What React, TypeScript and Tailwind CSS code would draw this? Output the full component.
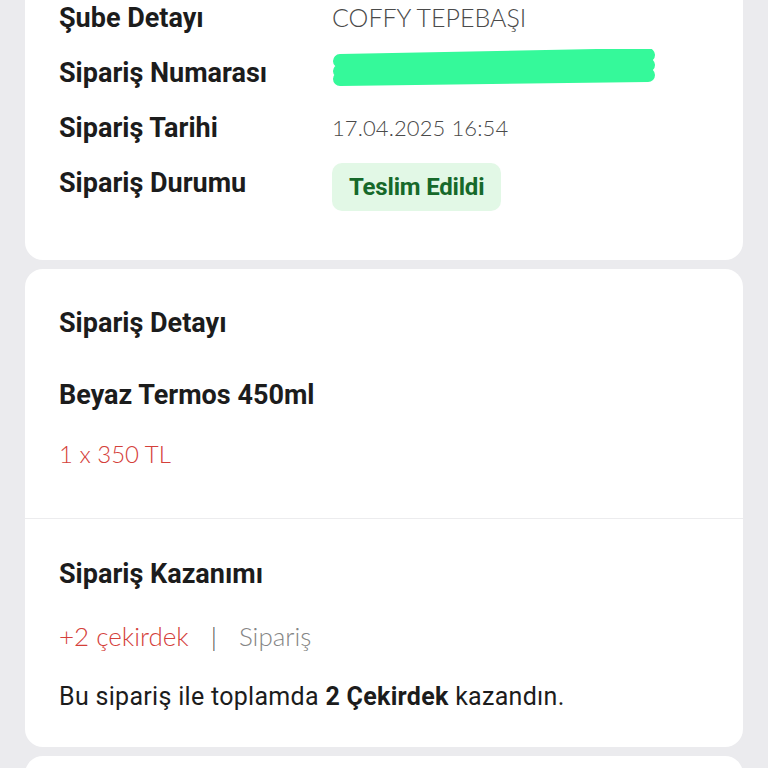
import React from "react";

const label = "text-[27px] leading-[32px] font-bold text-[#1c1c1c] tracking-[0px]";
const light = { fontFamily: "Lato, sans-serif" };

function Row({ title, children }: { title: string; children: React.ReactNode }) {
  return (
    <div className="flex items-center h-[55px]">
      <div className={`${label} w-[273px] shrink-0`}>{title}</div>
      <div className="flex-1">{children}</div>
    </div>
  );
}

function Scribble() {
  return (
    <svg width="330" height="40" viewBox="0 0 330 40" className="block -ml-[2px] -mt-[7px]">
      <path
        d="M10 12 L318 6 M10 22 L318 16 M10 30 L318 26"
        stroke="#35f99a"
        strokeWidth="14"
        strokeLinecap="round"
        fill="none"
      />
    </svg>
  );
}

export default function App() {
  return (
    <div
      className="w-[768px] h-[768px] overflow-hidden bg-[#ebebee] px-[25px]"
      style={{ fontFamily: "Roboto, 'Noto Sans', sans-serif" }}
    >
      {/* Şube / sipariş bilgileri */}
      <div className="bg-white rounded-b-[18px] px-[34px] pb-[50px] -mt-[10px]">
        <Row title="Şube Detayı">
          <span className="text-[25px] font-light text-[#4a4a4a]" style={light}>
            COFFY TEPEBAŞI
          </span>
        </Row>
        <Row title="Sipariş Numarası">
          <Scribble />
        </Row>
        <Row title="Sipariş Tarihi">
          <span className="text-[22px] font-light text-[#4a4a4a] tracking-[0.1px]" style={light}>
            17.04.2025 16:54
          </span>
        </Row>
        <Row title="Sipariş Durumu">
          <span className="inline-flex items-center h-[48px] bg-[#e2f8e6] text-[#16692a] font-bold text-[24px] tracking-[-0.2px] rounded-[10px] px-[17px] mt-[8px]">
            Teslim Edildi
          </span>
        </Row>
      </div>

      {/* Sipariş detayı */}
      <div className="bg-white rounded-[18px] mt-[9px]">
        <div className="px-[34px] pt-[38px] pb-[48px] border-b border-[#ececee]">
          <div className={label}>Sipariş Detayı</div>
          <div className={`${label} mt-[40px]`}>Beyaz Termos 450ml</div>
          <div className="text-[24px] leading-[32px] font-light text-[#d4403a] mt-[27px]" style={light}>
            1 x 350 TL
          </div>
        </div>
        <div className="px-[34px] pt-[39px] pb-[34px]">
          <div className={label}>Sipariş Kazanımı</div>
          <div className="flex items-center text-[26px] leading-[32px] font-light mt-[30px]" style={light}>
            <span className="text-[#d4403a]">+2 çekirdek</span>
            <span className="text-[#555] mx-[22px]">|</span>
            <span className="text-[#858585]">Sipariş</span>
          </div>
          <div className="text-[25px] leading-[32px] text-[#1c1c1c] tracking-[0.3px] mt-[29px]">
            Bu sipariş ile toplamda <span className="font-bold">2 Çekirdek</span> kazandın.
          </div>
        </div>
      </div>

      <div className="bg-white rounded-t-[18px] mt-[9px] h-[40px]" />
    </div>
  );
}
